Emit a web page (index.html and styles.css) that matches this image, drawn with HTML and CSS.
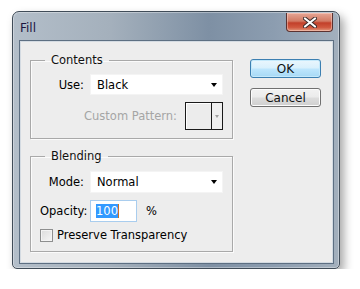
FILE: index.html
```html
<!DOCTYPE html>
<html>
<head>
<meta charset="utf-8">
<link rel="stylesheet" href="styles.css">
</head>
<body>
<div class="window">
  <div class="titlebar">
    <span class="title">Fill</span>
    <div class="close">
      <svg width="14" height="11" viewBox="0 0 14 11"><path d="M2 1.5 L12 9.5 M12 1.5 L2 9.5" stroke="#3a2a2a" stroke-width="4" stroke-linecap="round"/><path d="M2 1.5 L12 9.5 M12 1.5 L2 9.5" stroke="#fff" stroke-width="2.2" stroke-linecap="round"/></svg>
    </div>
  </div>
  <div class="client">
    <div class="groups">
      <fieldset class="group contents">
        <legend>Contents</legend>
        <div class="row">
          <label class="lbl">Use:</label>
          <div class="select"><span>Black</span><i class="arrow"></i></div>
        </div>
        <div class="row pattern">
          <span class="disabled">Custom Pattern:</span>
          <div class="pbox"><div class="swatch"></div><div class="pdrop"><i class="parrow"></i></div></div>
        </div>
      </fieldset>
      <fieldset class="group blending">
        <legend>Blending</legend>
        <div class="row">
          <label class="lbl">Mode:</label>
          <div class="select"><span>Normal</span><i class="arrow"></i></div>
        </div>
        <div class="row">
          <label class="lbl">Opacity:</label>
          <div class="input"><span class="sel">100</span><span class="caret"></span></div>
          <span class="pct">%</span>
        </div>
        <div class="row check">
          <span class="box"></span>
          <span>Preserve Transparency</span>
        </div>
      </fieldset>
    </div>
    <div class="buttons">
      <div class="btn ok">OK</div>
      <div class="btn">Cancel</div>
    </div>
  </div>
</div>
</body>
</html>
```
FILE: styles.css
```css
html, body {
  margin: 0;
  background: #fff;
}
body {
  font-family: "DejaVu Sans", Tahoma, sans-serif;
  font-size: 11.5px;
  color: #000;
}
.window {
  margin: 11px 0 0 12px;
  width: 328px;
  height: 258px;
  box-sizing: border-box;
  border: 1px solid #404c58;
  border-radius: 7px 7px 5px 5px;
  background: linear-gradient(90deg, #b3bec9 0%, #a4b0bc 30%, #7e90a4 60%, #8c9db0 80%, #a3b0bd 100%);
  padding: 0 6px 5px 7px;
  box-shadow: 4px 5px 10px rgba(0,0,0,0.35), inset 0 0 0 1px rgba(255,255,255,0.35);
  display: flex;
  flex-direction: column;
}
.titlebar {
  height: 29px;
  display: flex;
  justify-content: space-between;
  align-items: flex-start;
  flex: none;
}
.title {
  font-size: 12px;
  color: #1c1540;
  padding-top: 9px;
  line-height: 14px;
}
.close {
  margin-top: 1px;
  width: 47px;
  height: 19px;
  box-sizing: border-box;
  border: 1px solid #5b3230;
  border-top: none;
  border-radius: 0 0 4px 4px;
  background: linear-gradient(180deg, #e6a695 0%, #d27a64 45%, #c2402a 55%, #d0583f 80%, #e19a7e 100%);
  box-shadow: inset 0 0 0 1px rgba(255,220,210,0.45);
  display: flex;
  align-items: center;
  justify-content: center;
}
.client {
  flex: 1;
  background: #ededed;
  border: 1px solid #d4dbe2;
  box-shadow: 0 0 0 1px #5d6f82;
  display: flex;
  align-items: flex-start;
}
.groups {
  margin: 12px 0 0 9px;
  width: 203px;
  display: flex;
  flex-direction: column;
  gap: 11px;
}
.group {
  margin: 0;
  border: 1px solid #a9a9a9;
  box-shadow: inset 1px 1px 0 #fbfbfb, 1px 1px 0 #fbfbfb;
  padding: 8px 9px 8px 9px;
  display: flex;
  flex-direction: column;
  gap: 7px;
}
.group legend {
  margin-left: 5px;
  padding: 0 6px;
  line-height: 12px;
  font-size: 11.5px;
  color: #111;
}
.blending { padding-top: 9px; padding-bottom: 9px; gap: 6px; }
.blending .row:nth-child(3) { margin-top: 1px; }
.row {
  display: flex;
  align-items: center;
}
.lbl {
  width: 44px;
  text-align: right;
  margin-right: 6px;
  flex: none;
}
.select {
  flex: 1;
  height: 21px;
  box-sizing: border-box;
  background: #fff;
  border: 1px solid #f4f4f4;
  display: flex;
  align-items: center;
  justify-content: space-between;
  padding: 0 5px 0 6px;
}
.blending .select { height: 22px; }
.arrow {
  width: 0; height: 0;
  border-left: 3.5px solid transparent;
  border-right: 3.5px solid transparent;
  border-top: 4px solid #000;
}
.pattern {
  justify-content: flex-end;
}
.disabled {
  color: #a5a5a5;
  margin-right: 8px;
}
.pbox {
  width: 38px;
  height: 28px;
  box-sizing: border-box;
  border: 1px solid #1a1a1a;
  display: flex;
}
.swatch {
  flex: 1;
  border-right: 1px solid #1a1a1a;
  background: #ececec;
  box-shadow: inset 1px 1px 0 #fff;
}
.pdrop {
  width: 10px;
  display: flex;
  align-items: center;
  justify-content: center;
  background: #efefef;
}
.parrow {
  width: 0; height: 0;
  border-left: 2.5px solid transparent;
  border-right: 2.5px solid transparent;
  border-top: 3px solid #a0a0a0;
}
.input {
  width: 47px;
  height: 22px;
  box-sizing: border-box;
  background: #fff;
  border: 1px solid #a9cdee;
  display: flex;
  align-items: center;
  padding-left: 5px;
}
.sel {
  background: #3399ff;
  color: #fff;
  line-height: 14px;
}
.caret {
  width: 1px;
  height: 14px;
  background: #d07020;
}
.pct {
  margin-left: 9px;
}
.check {
  gap: 4px;
}
.box {
  width: 13px;
  height: 13px;
  box-sizing: border-box;
  border: 1px solid #8e8f8f;
  background: linear-gradient(135deg, #dcdcdc, #f6f6f6);
  box-shadow: inset 0 0 0 1px #f4f4f4;
}
.buttons {
  margin: 17px 0 0 17px;
  display: flex;
  flex-direction: column;
  gap: 10px;
}
.btn {
  width: 71px;
  height: 19px;
  box-sizing: border-box;
  border: 1px solid #707070;
  border-radius: 3px;
  background: linear-gradient(180deg, #f2f2f2 0%, #ebebeb 48%, #dddddd 52%, #cfcfcf 100%);
  box-shadow: inset 0 0 0 1px #fcfcfc;
  display: flex;
  align-items: center;
  justify-content: center;
  font-size: 12px;
  color: #111;
}
.btn.ok {
  border-color: #3c7fb1;
  background: linear-gradient(180deg, #eaf6fd 0%, #d9f0fc 48%, #bee6fd 52%, #a7d9f5 100%);
  box-shadow: inset 0 0 0 1px #c4e9fb;
}
```
